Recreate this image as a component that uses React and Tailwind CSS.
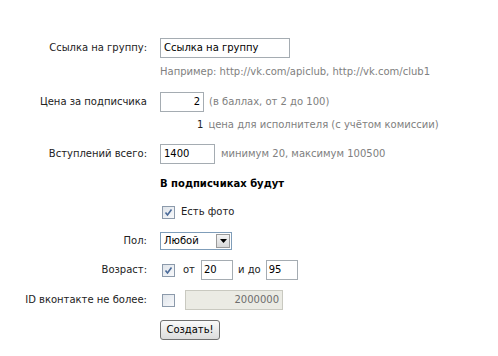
import React from "react";

const Check = ({ checked }) => (
  <div className="w-[13px] h-[13px] border border-[#8c9aab] bg-gradient-to-br from-[#dfe4ea] to-[#f8f9fb] flex items-center justify-center">
    {checked && (
      <svg width="9" height="9" viewBox="0 0 9 9">
        <path d="M1.5 4.5 L3.5 7 L7.5 1.5" fill="none" stroke="#4a6a99" strokeWidth="1.6" />
      </svg>
    )}
  </div>
);

const Label = ({ children }) => (
  <div className="w-[148px] shrink-0 text-right pr-[1px] text-[#222]">{children}</div>
);

export default function App() {
  return (
    <div
      className="w-[498px] h-[356px] bg-white text-[10px] leading-[14px] text-[#222] overflow-hidden"
      style={{ fontFamily: '"DejaVu Sans", sans-serif' }}
    >
      <div className="flex flex-col pt-[38px]">
        <div className="flex items-center h-[20px]">
          <Label>Ссылка на группу:</Label>
          <div className="ml-[12px] w-[130px] h-[20px] border border-[#a5acb2] px-[3px] flex items-center text-black">
            Ссылка на группу
          </div>
        </div>
        <div className="mt-[7px] ml-[160px] h-[14px] text-[#808080] whitespace-nowrap">
          Например: http://vk.com/apiclub, http://vk.com/club1
        </div>
        <div className="flex items-center h-[20px] mt-[13px]">
          <Label>Цена за подписчика</Label>
          <div className="ml-[12px] w-[44px] h-[20px] border border-[#a5acb2] px-[3px] flex items-center justify-end text-black">
            2
          </div>
          <span className="ml-[5px] text-[#808080] whitespace-nowrap">(в баллах, от 2 до 100)</span>
        </div>
        <div className="mt-[6px] ml-[197px] h-[14px] whitespace-nowrap">
          <span className="text-[#222]">1</span>
          <span className="ml-[5px] text-[#808080]">цена для исполнителя (с учётом комиссии)</span>
        </div>
        <div className="flex items-center h-[20px] mt-[12px]">
          <Label>Вступлений всего:</Label>
          <div className="ml-[12px] w-[55px] h-[20px] border border-[#a5acb2] px-[3px] flex items-center text-black">
            1400
          </div>
          <span className="ml-[6px] text-[#808080] whitespace-nowrap">минимум 20, максимум 100500</span>
        </div>
        <div className="mt-[13px] ml-[160px] h-[14px] font-bold text-black whitespace-nowrap">
          В подписчиках будут
        </div>
        <div className="flex items-center h-[20px] mt-[11px] ml-[162px]">
          <Check checked />
          <span className="ml-[6px]">Есть фото</span>
        </div>
        <div className="flex items-center h-[20px] mt-[9px]">
          <Label>Пол:</Label>
          <div className="ml-[12px] w-[72px] h-[18px] border border-[#7f9db9] flex items-center justify-between pl-[3px] pr-[1px] bg-white">
            <span className="text-black">Любой</span>
            <div className="w-[14px] h-[14px] border border-[#9a9a9a] bg-gradient-to-b from-[#f4f4f4] to-[#d8d8d8] flex items-center justify-center">
              <svg width="7" height="4" viewBox="0 0 7 4">
                <path d="M0 0 L7 0 L3.5 4 Z" fill="#000" />
              </svg>
            </div>
          </div>
        </div>
        <div className="flex items-center h-[20px] mt-[9px]">
          <Label>Возраст:</Label>
          <div className="ml-[14px]">
            <Check checked />
          </div>
          <span className="ml-[8px]">от</span>
          <div className="ml-[6px] w-[32px] h-[20px] border border-[#a5acb2] px-[2px] flex items-center text-black">
            20
          </div>
          <span className="ml-[5px]">и до</span>
          <div className="ml-[5px] w-[32px] h-[20px] border border-[#a5acb2] px-[2px] flex items-center text-black">
            95
          </div>
        </div>
        <div className="flex items-center h-[20px] mt-[10px]">
          <Label>ID вконтакте не более:</Label>
          <div className="ml-[14px]">
            <Check />
          </div>
          <div className="ml-[10px] w-[98px] h-[20px] border border-[#c9c9c0] bg-[#ebebe4] px-[3px] flex items-center justify-end text-[#6d6d6d]">
            2000000
          </div>
        </div>
        <div className="mt-[10px] ml-[160px]">
          <div className="inline-flex items-center justify-center w-[60px] h-[20px] border border-[#707070] rounded-[3px] bg-gradient-to-b from-[#fafafa] to-[#dcdcdc] text-black">
            Создать!
          </div>
        </div>
      </div>
    </div>
  );
}
